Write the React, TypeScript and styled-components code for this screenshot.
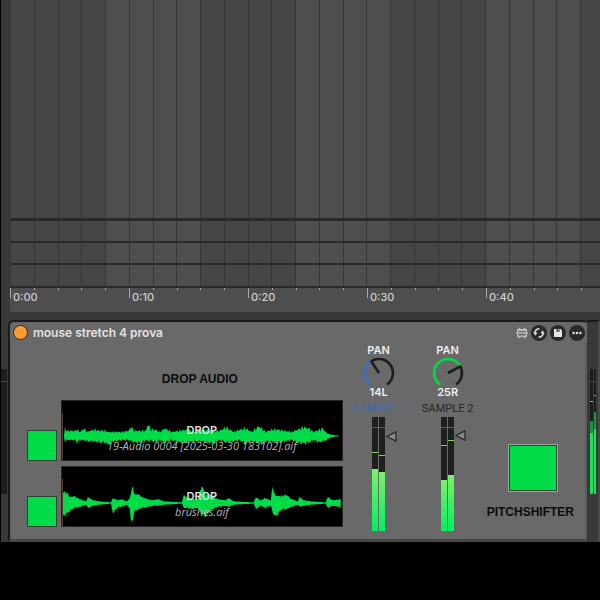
import React, { useState } from 'react';
import styled, { createGlobalStyle } from 'styled-components';

const GlobalStyle = createGlobalStyle`
  * { box-sizing: border-box; }
  body { margin: 0; background: #000; font-family: 'Inter', sans-serif; }
  button { padding: 0; margin: 0; font: inherit; }
`;

const Page = styled.div`
  min-height: 100vh;
  background: #000;
  padding-left: 1px;
  overflow: hidden;
`;
const Workspace = styled.div`
  background: #393939;
`;
const Timeline = styled.section`
  margin-left: 9px;
  overflow: hidden;
`;
const Lane = styled.div<{ $height: number; $line: number }>`
  display: flex;
  overflow: hidden;
  height: ${p => p.$height}px;
  border-bottom: ${p => p.$line}px solid #2a2a2a;
`;
const Band = styled.div<{ $light: boolean }>`
  display: flex;
  flex: none;
  width: 95px;
  background: ${p => (p.$light ? '#4e4e4e' : '#464646')};
`;
const Beat = styled.div`
  flex: 1;
  border-left: 1px solid #363636;
`;
const Ruler = styled.div`
  display: flex;
  height: 24px;
  overflow: hidden;
  background: #4e4e4e;
  border-bottom-left-radius: 3px;
`;
const RulerSpan = styled.div`
  position: relative;
  display: flex;
  flex: none;
  width: 119px;
`;
const Tick = styled.div<{ $major?: boolean }>`
  flex: 1;
  height: ${p => (p.$major ? 10 : 2)}px;
  border-left: 1px solid #a8a8a8;
`;
const TimeLabel = styled.span`
  position: absolute;
  left: 3px;
  top: 2px;
  font: 500 11px/14px 'Inter', sans-serif;
  color: #cfcfcf;
`;

const DeviceRow = styled.div`
  display: flex;
  margin-top: 8px;
`;
const LeftEdge = styled.div`
  width: 6px;
  flex: none;
  padding-top: 49px;
`;
const EdgeMeter = styled.div`
  height: 125px;
  background: linear-gradient(#1d1d1d 12px, #444 12px, #444 13px, #1d1d1d 13px);
`;
const Device = styled.section`
  flex: 1;
  min-width: 0;
  margin-left: 1px;
  border: 2px solid #1a1a1a;
  border-right: 0;
  border-bottom: 3px solid #474747;
  border-radius: 6px 4px 0 0;
  background: #696969;
`;
const Header = styled.header`
  display: flex;
  align-items: center;
  height: 21px;
  padding: 0 2px 0 3px;
  gap: 3px;
`;
const PowerButton = styled.button`
  width: 15px;
  height: 15px;
  border: 1px solid #33271b;
  border-radius: 50%;
  background: #ff9a35;
`;
const Title = styled.h1`
  flex: 1;
  margin: 0 0 0 2px;
  font: 600 12px/16px 'Inter', sans-serif;
  color: #e2e2e2;
`;
const IconButton = styled.button<{ $plain?: boolean }>`
  display: flex;
  align-items: center;
  justify-content: center;
  width: ${p => (p.$plain ? 12 : 16)}px;
  height: 16px;
  border: 0;
  border-radius: 50%;
  background: ${p => (p.$plain ? 'none' : '#292929')};
`;
const Body = styled.div`
  display: flex;
  gap: 3px;
  height: 196px;
  padding-left: 16px;
  border-left: 1px solid #5b5b5b;
  border-right: 2px solid #5b5b5b;
`;
const Samples = styled.div`
  flex: 1;
  min-width: 0;
  display: flex;
  flex-direction: column;
  gap: 5px;
  padding-top: 28px;
`;
const Caption = styled.h2`
  margin: 0;
  font: 700 12px/16px 'Liberation Sans', sans-serif;
  color: #0c0c0c;
  text-align: center;
`;
const SamplesCaption = styled(Caption)`
  margin: 0 0 8px 30px;
`;
const SampleRow = styled.div`
  display: flex;
  align-items: flex-end;
  gap: 4px;
`;
const Pad = styled.button`
  flex: none;
  width: 30px;
  height: 31px;
  border: 1px solid #2d4433;
  background: #00dc48;
`;
const LargePad = styled(Pad)`
  width: 50px;
  height: 48px;
  margin-left: 6px;
  border: 2px solid #2d4433;
  outline: 1px solid #a2a2a2;
  outline-offset: -1px;
`;
const DropZone = styled.button`
  position: relative;
  flex: 1;
  min-width: 0;
  height: 61px;
  border: 1px solid #262626;
  background: #000;
  overflow: hidden;
`;
const Wave = styled.svg`
  display: block;
  width: 100%;
  height: 59px;
`;
const DropText = styled.span`
  position: absolute;
  inset: 22px 0 auto;
  display: flex;
  flex-direction: column;
  align-items: center;
  color: #e0e0e0;
  font: 600 11px/15px 'Inter', sans-serif;
`;
const FileName = styled.em`
  font: italic 11px/15px 'Open Sans', sans-serif;
  color: #b4b4b4;
  white-space: nowrap;
`;
const Channel = styled.div`
  flex: none;
  width: 66px;
  display: flex;
  flex-direction: column;
  align-items: center;
  color: #ececec;
  font: 600 11px/12px 'Inter', sans-serif;
  padding-top: 1px;
`;
const KnobBox = styled.label`
  display: flex;
  flex-direction: column;
  align-items: center;
  position: relative;
`;
const HiddenRange = styled.input`
  position: absolute;
  inset: 0;
  width: 100%;
  height: 100%;
  margin: 0;
  opacity: 0;
`;
const ChannelName = styled.div<{ $color: string }>`
  margin-top: 5px;
  color: ${p => p.$color};
  font: 400 11px/12px 'Roboto', sans-serif;
  white-space: nowrap;
`;
const MeterPair = styled.div`
  position: relative;
  display: flex;
  gap: 1px;
  margin-top: 2px;
`;
const Meter = styled.div`
  position: relative;
  display: flex;
  align-items: flex-end;
  width: 6px;
  height: 114px;
  background: linear-gradient(#1f1f1f 10px, #5c5c5c 10px, #5c5c5c 11px, #1f1f1f 11px);
`;
const Level = styled.div<{ $height: number }>`
  width: 100%;
  height: ${p => p.$height}px;
  background: linear-gradient(#7af26a, #00f062);
`;
const Peak = styled.div<{ $bottom: number; $color?: string }>`
  position: absolute;
  left: 0;
  right: 0;
  bottom: ${p => p.$bottom}px;
  height: 1px;
  background: ${p => p.$color ?? '#7fd858'};
`;
const Fader = styled.label<{ $top: number }>`
  position: absolute;
  left: 14px;
  top: ${p => p.$top}px;
  display: flex;
`;
const PitchPanel = styled.div`
  flex: none;
  display: flex;
  flex-direction: column;
  align-items: center;
  gap: 12px;
  margin: 101px 11px 0 3px;
`;
const MasterStrip = styled.aside`
  flex: none;
  width: 13px;
  padding: 47px 2px 0 3px;
  border-top: 2px solid #1a1a1a;
  border-right: 2px solid #4b4b4b;
`;
const MasterMeters = styled.div`
  display: flex;
  gap: 1px;
  height: 125px;
`;
const MasterMeter = styled.div`
  position: relative;
  flex: 1;
  display: flex;
  align-items: flex-end;
  background: linear-gradient(#1c1c1c 12px, #4a4a4a 12px, #4a4a4a 13px, #1c1c1c 13px);
`;
const MasterLevel = styled.div<{ $height: number; $hold: number }>`
  width: 100%;
  height: ${p => p.$height}px;
  background: linear-gradient(#19903f ${p => p.$hold}px, #1ee35c ${p => p.$hold}px);
`;

type Point = [number, number, number];

const audioEnvelope: Point[] = [
  [2, 0, 0], [3, 6, 4], [5, 4, 3], [13, 4, 3], [15, 5, 5], [18, 3, 3], [22, 6, 3], [25, 3, 4], [32, 5, 4], [38, 4, 5],
  [43, 4, 5], [46, 3, 7], [50, 3, 4], [60, 3, 3], [67, 4, 3], [69, 8, 4], [72, 4, 5], [80, 4, 5], [84, 4, 3], [86, 10, 4],
  [89, 5, 3], [93, 5, 5], [98, 3, 3], [103, 6, 5], [110, 3, 3], [118, 4, 5], [126, 5, 5], [132, 3, 4], [140, 5, 4],
  [150, 4, 6], [158, 4, 3], [164, 7, 5], [172, 3, 4], [178, 5, 3], [184, 6, 6], [190, 3, 4], [197, 8, 5], [201, 5, 6],
  [204, 3, 4], [210, 5, 4], [216, 5, 5], [223, 4, 4], [230, 3, 3], [236, 5, 5], [242, 7, 6], [247, 6, 5], [252, 3, 3],
  [258, 5, 5], [261, 6, 4], [265, 2, 3], [268, 1, 1], [274, 0, 0], [278, 0, 0],
];
const brushEnvelope: Point[] = [
  [0, 1, 2], [1, 10, 12], [5, 9, 9], [8, 5, 7], [12, 6, 4], [18, 3, 3], [24, 1, 1], [26, 5, 4], [31, 2, 2], [38, 1, 1],
  [49, 0, 0], [51, 4, 9], [56, 2, 3], [60, 3, 3], [65, 1, 1], [68, 4, 5], [69, 10, 19], [71, 14, 14], [73, 7, 6],
  [76, 8, 6], [80, 5, 4], [86, 3, 3], [91, 2, 2], [96, 3, 2], [102, 1, 1], [120, 0, 0], [122, 7, 4], [126, 4, 4],
  [130, 3, 5], [136, 3, 4], [138, 9, 7], [140, 16, 10], [144, 7, 12], [149, 7, 6], [156, 3, 3], [164, 2, 2], [167, 4, 3],
  [172, 1, 1], [192, 0, 0], [194, 5, 5], [199, 2, 2], [203, 4, 4], [209, 2, 2], [211, 16, 8], [213, 7, 12], [216, 6, 10],
  [220, 6, 5], [225, 7, 5], [230, 3, 3], [236, 1, 1], [238, 5, 3], [242, 2, 2], [250, 1, 1], [264, 0, 0], [266, 5, 4],
  [271, 2, 2], [278, 3, 3], [280, 3, 6],
];

function wavePath(points: Point[], mid: number, grain: number) {
  const upper: string[] = [];
  const lower: string[] = [];
  for (let i = 0; i < points.length - 1; i++) {
    const [x0, u0, d0] = points[i];
    const [x1, u1, d1] = points[i + 1];
    for (let x = x0; x < x1; x++) {
      const t = (x - x0) / (x1 - x0);
      const u = u0 + (u1 - u0) * t;
      const d = d0 + (d1 - d0) * t;
      const a = 1 + grain * (0.3 + Math.sin(x * 12.9) * Math.cos(x * 4.1));
      const b = 1 + grain * (0.3 + Math.cos(x * 7.3) * Math.sin(x * 3.7));
      upper.push(`${x} ${(mid - 0.6 - u * a).toFixed(1)}`);
      lower.unshift(`${x} ${(mid + 0.6 + d * b).toFixed(1)}`);
    }
  }
  return `M${upper.join('L')}L${lower.join('L')}Z`;
}

const lanes = [[221, 3], [22, 2], [22, 2], [23, 2]];
const times = ['0:00', '0:10', '0:20', '0:30', '0:40'];

const polar = (deg: number, r: number) => {
  const a = (deg * Math.PI) / 180;
  return `${(17 + r * Math.sin(a)).toFixed(2)} ${(17 - r * Math.cos(a)).toFixed(2)}`;
};
const arc = (from: number, to: number) =>
  `M${polar(from, 14)}A14 14 0 ${to - from > 180 ? 1 : 0} 1 ${polar(to, 14)}`;

function Pan({ angle, value, color, name }: { angle: number; value: string; color: string; name: string }) {
  return (
    <KnobBox>
      <span>PAN</span>
      <svg width="34" height="30" viewBox="0 0 34 30" fill="none" strokeWidth="2.6">
        <path d={arc(angle, 145)} stroke="#1c1c1c" />
        <path d={arc(-145, angle)} stroke={color} />
        <path d={`M17 17L${polar(angle, 15)}`} stroke="#1c1c1c" />
      </svg>
      <span>{value}</span>
      <HiddenRange type="range" min="-50" max="50" defaultValue={parseInt(value)} aria-label={`${name} pan`} />
    </KnobBox>
  );
}

interface ChannelProps {
  name: string; nameColor: string; color: string; angle: number; value: string;
  levels: number[]; peaks: number[]; fader: number;
}

function ChannelStrip({ name, nameColor, color, angle, value, levels, peaks, fader }: ChannelProps) {
  return (
    <Channel>
      <Pan angle={angle} value={value} color={color} name={name} />
      <ChannelName $color={nameColor}>{name}</ChannelName>
      <MeterPair>
        {levels.map((level, i) => (
          <Meter key={i}><Level $height={level} /><Peak $bottom={peaks[i]} /></Meter>
        ))}
        <Fader $top={fader}>
          <svg width="11" height="11" viewBox="0 0 11 11">
            <path d="M1 5.5L10 .8V10.2Z" fill="#888" stroke="#292929" strokeWidth="1.3" />
          </svg>
          <HiddenRange type="range" aria-label={`${name} volume`} />
        </Fader>
      </MeterPair>
    </Channel>
  );
}

function Sample({ file, points, mid, grain }: { file: string; points: Point[]; mid: number; grain: number }) {
  return (
    <SampleRow>
      <Pad aria-label={`Play ${file}`} />
      <DropZone>
        <Wave viewBox="0 0 280 59" preserveAspectRatio="none">
          <path d={wavePath(points, mid, grain)} fill="#00dc48" />
          <path d="M.5 12V59" stroke="#5a3a22" strokeWidth="1" />
        </Wave>
        <DropText>DROP<FileName>{file}</FileName></DropText>
      </DropZone>
    </SampleRow>
  );
}

export default function App() {
  const [on, setOn] = useState(true);
  return (
    <Page>
      <GlobalStyle />
      <Workspace>
        <Timeline>
          {lanes.map(([height, line], i) => (
            <Lane key={i} $height={height} $line={line}>
              {Array.from({ length: 12 }, (_, b) => (
                <Band key={b} $light={b % 2 === 1}><Beat /><Beat /><Beat /><Beat /></Band>
              ))}
            </Lane>
          ))}
          <Ruler>
            {times.map(time => (
              <RulerSpan key={time}>
                <Tick $major /><Tick /><Tick /><Tick /><Tick />
                <TimeLabel>{time}</TimeLabel>
              </RulerSpan>
            ))}
          </Ruler>
        </Timeline>
        <DeviceRow>
          <LeftEdge><EdgeMeter /></LeftEdge>
          <Device>
            <Header>
              <PowerButton aria-label="Device on" aria-pressed={on} onClick={() => setOn(!on)} />
              <Title>mouse stretch 4 prova</Title>
              <IconButton $plain aria-label="Open editor">
                <svg width="12" height="12" viewBox="0 0 12 12" fill="none" stroke="#b9b9b9">
                  <path d="M1.7 2.7h8.6v6.6H1.7z" strokeWidth="1.4" />
                  <path d="M1 3.2h10M0 6h12M3.5 .8v2M8.5 .8v2M3.5 9.2v2M8.5 9.2v2" strokeWidth="1.7" />
                </svg>
              </IconButton>
              <IconButton aria-label="Swap preset">
                <svg width="12" height="12" viewBox="0 0 12 12" fill="none" stroke="#d9d9d9" strokeWidth="1.7">
                  <path d="M1.9 7A4.1 4.1 0 0 1 6.4 1.9M10.1 5A4.1 4.1 0 0 1 5.6 10.1" />
                  <path d="M.2 5.6H4.4L2.6 8.8ZM11.8 6.4H7.6L9.4 3.2Z" fill="#d9d9d9" stroke="none" />
                </svg>
              </IconButton>
              <IconButton aria-label="Save preset">
                <svg width="10" height="10" viewBox="0 0 10 10">
                  <path d="M1 1H7.6L9 2.4V9H1Z" fill="#e4e4e4" />
                  <path d="M3.4 1.4H6.6V3.6H3.4Z" fill="#292929" />
                  <path d="M5.2 1.6H6V2.8H5.2Z" fill="#e4e4e4" />
                </svg>
              </IconButton>
              <IconButton aria-label="More options">
                <svg width="10" height="4" viewBox="0 0 10 4" fill="#dedede">
                  <circle cx="1.6" cy="2" r="1.3" /><circle cx="5" cy="2" r="1.3" /><circle cx="8.4" cy="2" r="1.3" />
                </svg>
              </IconButton>
            </Header>
            <Body>
              <Samples>
                <SamplesCaption>DROP AUDIO</SamplesCaption>
                <Sample file="19-Audio 0004 [2025-03-30 183102].aif" points={audioEnvelope} mid={35} grain={0.45} />
                <Sample file="brushes.aif" points={brushEnvelope} mid={36} grain={0.2} />
              </Samples>
              <ChannelStrip name="SAMPLE 1" nameColor="#416bb5" color="#3c6cc4" angle={-33} value="14L"
                levels={[62, 59]} peaks={[78, 75]} fader={14} />
              <ChannelStrip name="SAMPLE 2" nameColor="#272727" color="#00dc48" angle={62} value="25R"
                levels={[51, 56]} peaks={[85, 90]} fader={13} />
              <PitchPanel>
                <LargePad aria-label="Toggle pitchshifter" />
                <Caption>PITCHSHIFTER</Caption>
              </PitchPanel>
            </Body>
          </Device>
          <MasterStrip>
            <MasterMeters>
              <MasterMeter><MasterLevel $height={73} $hold={12} /><Peak $bottom={92} $color="#c79a38" /></MasterMeter>
              <MasterMeter><MasterLevel $height={82} $hold={17} /><Peak $bottom={98} $color="#d08f35" /></MasterMeter>
            </MasterMeters>
          </MasterStrip>
        </DeviceRow>
      </Workspace>
    </Page>
  );
}
